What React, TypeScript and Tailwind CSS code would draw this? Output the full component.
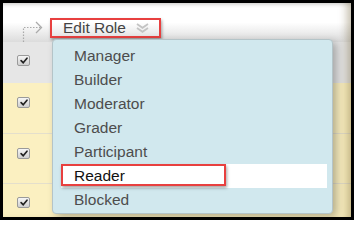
const roles = ["Manager", "Builder", "Moderator", "Grader", "Participant", "Reader", "Blocked"]

const RowCheck = () => (
	<div className="flex h-[11px] w-[13px] items-center justify-center rounded-[2px] border border-[#9a9a9a] bg-gradient-to-b from-[#f6f6f6] to-[#cfcfcf]">
		<svg viewBox="0 0 12 10" className="h-[9px] w-[10px]">
			<path d="M2.5 5.2 L5 7.6 L9.6 2.2" fill="none" stroke="#222" strokeWidth="2" strokeLinecap="round" />
		</svg>
	</div>
)

const App = () => {
	return (
		<div className="h-[222px] w-[356px] bg-white font-['Liberation_Sans',Arial,sans-serif]">
			<div className="relative h-[220px] w-[354px] overflow-hidden border-[3px] border-black">
				{/* header */}
				<div className="flex h-[39px] items-start bg-gradient-to-b from-white via-white to-[#dcdcdc]">
					<svg viewBox="0 0 21 21" className="ml-[19px] mt-[18px] h-[21px] w-[21px]">
						<path d="M1.5 21 V6.5 H19" fill="none" stroke="#aaa" strokeWidth="1.2" strokeDasharray="1.5 1.5" />
						<path d="M14 1 L19.5 6.5 L14 12" fill="none" stroke="#aaa" strokeWidth="1.3" />
					</svg>
					<div className="ml-[7px] mt-[15px] flex h-[20px] w-[111px] items-center border-[2.5px] border-[#e8403f] pl-[11px] shadow-[1px_2px_3px_rgba(0,0,0,0.35)]">
						<span className="text-[15.5px] leading-none text-[#444]">Edit Role</span>
						<svg viewBox="0 0 13 10" className="ml-auto mr-[10px] h-[10px] w-[13px]">
							<path d="M1 1 L6.5 4.8 L12 1 M1 5 L6.5 8.8 L12 5" fill="none" stroke="#c4c4c4" strokeWidth="1.8" />
						</svg>
					</div>
				</div>

				{/* rows */}
				<div className="flex h-[41px] items-start bg-[#e6e6e6] pl-[14px] pt-[13px]">
					<RowCheck />
				</div>
				<div className="flex h-[50px] items-start bg-[#fbf0c1] pl-[14px] pt-[14px]">
					<RowCheck />
				</div>
				<div className="flex h-[50px] items-start border-t border-[#e4dfcc] bg-[#fbf0c1] pl-[14px] pt-[14px]">
					<RowCheck />
				</div>
				<div className="flex h-[50px] items-start border-t border-[#e4dfcc] bg-[#fbf0c1] pl-[14px] pt-[13px]">
					<RowCheck />
				</div>

				<div className="pointer-events-none absolute inset-0 shadow-[inset_-9px_0_8px_-5px_rgba(90,70,20,0.35),inset_0_4px_4px_-3px_rgba(0,0,0,0.2)]" />

				{/* dropdown */}
				<div className="absolute left-[49px] top-[36px] h-[175px] w-[281px] rounded-[4px] border border-[#b4c4c8] bg-[#d1e8ee] pt-[4px] shadow-[4px_3px_8px_rgba(0,0,0,0.28)]">
					{roles.map((role) =>
						role === "Reader" ? (
							<div key={role} className="relative ml-2 mr-[5px] flex h-[24px] items-center bg-white pl-[13px] text-[15.5px] text-[#111]">
								{role}
								<div className="absolute left-0 top-0 h-[22px] w-[165px] border-[2.5px] border-[#e8403f] shadow-[1px_2px_3px_rgba(0,0,0,0.35)]" />
							</div>
						) : (
							<div key={role} className="ml-2 mr-[5px] flex h-[24px] items-center pl-[13px] text-[15.5px] text-[#4d4d4d]">
								{role}
							</div>
						)
					)}
				</div>
			</div>
		</div>
	)
}

export default App
